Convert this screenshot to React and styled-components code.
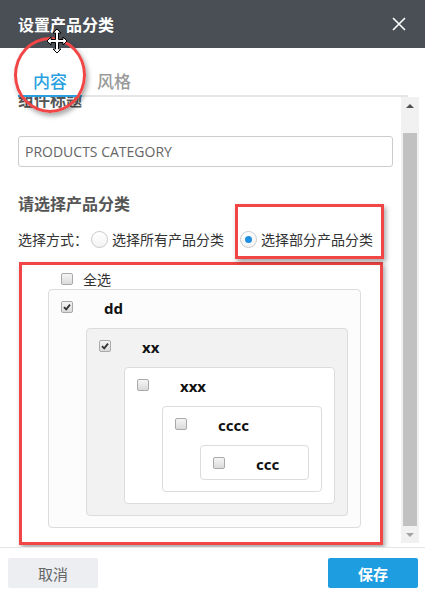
import styled, { createGlobalStyle, css } from "styled-components";

const GlobalStyle = createGlobalStyle`
  html, body {
    margin: 0;
    padding: 0;
    background: #fff;
  }
  body {
    font-family: "Noto Sans", "Noto Sans CJK SC", sans-serif;
    color: #333;
  }
`;

const tree = {
  label: "dd",
  checked: true,
  bg: "#fcfcfc",
  child: {
    label: "xx",
    checked: true,
    bg: "#f2f2f2",
    child: {
      label: "xxx",
      bg: "#fff",
      child: {
        label: "cccc",
        bg: "#fff",
        child: { label: "ccc", bg: "#fff" },
      },
    },
  },
};

function Checkbox({ checked }) {
  return (
    <Box>
      {checked && (
        <svg width="10" height="10" viewBox="0 0 10 10">
          <path d="M2 5.2 L4.2 7.4 L8 2.6" fill="none" stroke="#333" strokeWidth="1.8" />
        </svg>
      )}
    </Box>
  );
}

function Node({ node }) {
  return (
    <NodeBox $bg={node.bg} $leaf={!node.child}>
      <NodeRow>
        <Checkbox checked={node.checked} />
        <NodeLabel>{node.label}</NodeLabel>
      </NodeRow>
      {node.child && <Node node={node.child} />}
    </NodeBox>
  );
}

function App() {
  return (
    <Dialog>
      <GlobalStyle />
      <Header>
        <Title>设置产品分类</Title>
        <svg width="14" height="14" viewBox="0 0 14 14">
          <path d="M1 1 L13 13 M13 1 L1 13" stroke="#fff" strokeWidth="1.6" />
        </svg>
      </Header>

      <TabBar>
        <Tab $active>内容</Tab>
        <Tab>风格</Tab>
      </TabBar>

      <Body>
        <ScrollPane>
          <Content>
            <FieldLabel>组件标题</FieldLabel>
            <Input>PRODUCTS CATEGORY</Input>
            <SectionTitle>请选择产品分类</SectionTitle>
            <ModeRow>
              <span>选择方式：</span>
              <RadioOption>
                <Radio />
                <span>选择所有产品分类</span>
              </RadioOption>
              <RadioOption $marked>
                <Radio $on />
                <span>选择部分产品分类</span>
              </RadioOption>
            </ModeRow>
            <TreeFrame>
              <SelectAll>
                <Checkbox />
                <span>全选</span>
              </SelectAll>
              <Node node={tree} />
            </TreeFrame>
          </Content>
        </ScrollPane>
        <ScrollTrack>
          <ArrowCell>
            <Triangle $up />
          </ArrowCell>
          <ThumbArea>
            <Thumb />
          </ThumbArea>
          <ArrowCell>
            <Triangle />
          </ArrowCell>
        </ScrollTrack>
      </Body>

      <Footer>
        <Button>取消</Button>
        <Button $primary>保存</Button>
      </Footer>

      <CircleMark />
      <Cursor width="22" height="26" viewBox="0 0 22 26">
        <path
          d="M11 1 L15 5 L12.5 5 L12.5 11.5 L17 11.5 L17 9 L21 13 L17 17 L17 14.5 L12.5 14.5 L12.5 21 L15 21 L11 25 L7 21 L9.5 21 L9.5 14.5 L5 14.5 L5 17 L1 13 L5 9 L5 11.5 L9.5 11.5 L9.5 5 L7 5 Z"
          fill="#fff"
          stroke="#000"
          strokeWidth="1"
        />
      </Cursor>
    </Dialog>
  );
}

const markShadow = css`
  border: 3px solid #f24545;
  box-shadow: 2px 3px 5px rgba(0, 0, 0, 0.35);
`;

const Dialog = styled.div`
  position: relative;
  width: 425px;
  height: 596px;
  display: flex;
  flex-direction: column;
  background: #fff;
  overflow: hidden;
`;

const Header = styled.div`
  height: 48px;
  flex-shrink: 0;
  background: #4a4e55;
  display: flex;
  align-items: center;
  justify-content: space-between;
  padding: 0 19px 0 18px;
`;

const Title = styled.div`
  color: #fff;
  font-size: 16px;
  font-weight: 700;
  font-family: "Noto Sans CJK SC", sans-serif;
`;

const TabBar = styled.div`
  height: 47px;
  margin: 0 17px 0 18px;
  border-bottom: 2px solid #e6e6e6;
  display: flex;
  align-items: flex-end;
`;

const Tab = styled.div`
  padding: 0 15px;
  height: 25px;
  margin-bottom: -2px;
  font-size: 17px;
  line-height: 22px;
  font-family: "Noto Sans CJK SC", sans-serif;
  font-weight: 500;
  color: ${(p) => (p.$active ? "#2a9fe0" : "#9a9a9a")};
  border-bottom: 2px solid ${(p) => (p.$active ? "#2a9fe0" : "transparent")};
`;

const Body = styled.div`
  height: 450px;
  flex-shrink: 0;
  display: flex;
`;

const ScrollPane = styled.div`
  flex: 1;
  overflow: hidden;
  padding: 0 8px 0 18px;
`;

const Content = styled.div`
  margin-top: -10px;
  display: flex;
  flex-direction: column;
`;

const FieldLabel = styled.div`
  font-size: 16px;
  font-weight: 700;
  line-height: 24px;
  color: #555;
  font-family: "Noto Sans CJK SC", sans-serif;
`;

const Input = styled.div`
  margin-top: 25px;
  height: 31px;
  box-sizing: border-box;
  border: 1px solid #ccc;
  border-radius: 3px;
  padding: 0 6px;
  display: flex;
  align-items: center;
  font-family: "Open Sans", sans-serif;
  font-size: 14px;
  color: #666;
`;

const SectionTitle = styled(FieldLabel)`
  margin-top: 24px;
`;

const ModeRow = styled.div`
  margin-top: 12px;
  height: 24px;
  display: flex;
  align-items: center;
  font-size: 14px;
  color: #333;
  font-family: "Noto Sans CJK SC", sans-serif;
`;

const RadioOption = styled.label`
  position: relative;
  display: flex;
  align-items: center;
  gap: 4px;
  margin-left: ${(p) => (p.$marked ? "16px" : "3px")};

  ${(p) =>
    p.$marked &&
    css`
      &::after {
        content: "";
        position: absolute;
        top: -25px;
        bottom: -10px;
        left: -5px;
        right: -11px;
        ${markShadow}
      }
    `}
`;

const Radio = styled.span`
  width: 17px;
  height: 17px;
  box-sizing: border-box;
  border-radius: 50%;
  border: 1px solid #c9c9c9;
  background: linear-gradient(#fff, #f3f3f3);
  display: flex;
  align-items: center;
  justify-content: center;

  &::after {
    content: "";
    width: 7px;
    height: 7px;
    border-radius: 50%;
    background: #1e8fe0;
    display: ${(p) => (p.$on ? "block" : "none")};
  }
`;

const TreeFrame = styled.div`
  margin: 11px 0 0 1px;
  width: 364px;
  box-sizing: border-box;
  padding: 6px 19px 14px 26px;
  ${markShadow}
`;

const SelectAll = styled.div`
  height: 16px;
  display: flex;
  align-items: center;
  gap: 10px;
  padding-left: 13px;
  margin-bottom: 2px;
  font-size: 14px;
  color: #333;
  font-family: "Noto Sans CJK SC", sans-serif;
`;

const Box = styled.span`
  width: 12px;
  height: 12px;
  box-sizing: border-box;
  border: 1px solid #a9a9a9;
  border-radius: 2px;
  background: linear-gradient(#f5f5f5, #dadada);
  display: flex;
  align-items: center;
  justify-content: center;
  flex-shrink: 0;
`;

const NodeBox = styled.div`
  background: ${(p) => p.$bg};
  border: 1px solid #dcdcdc;
  border-radius: 4px;
  padding: 9px 12px ${(p) => (p.$leaf ? "8px" : "11px")} 12px;

  & > & {
    margin: 13px 0 0 25px;
  }
`;

const NodeRow = styled.div`
  height: 16px;
  display: flex;
  align-items: center;
  gap: 31px;
`;

const NodeLabel = styled.span`
  font-size: 15px;
  font-weight: 700;
  color: #111;
  font-family: "Noto Sans", sans-serif;
  position: relative;
  top: 1px;
`;

const ScrollTrack = styled.div`
  width: 18px;
  height: 446px;
  margin-right: 6px;
  background: #f1f1f1;
  display: flex;
  flex-direction: column;
`;

const ArrowCell = styled.div`
  height: 17px;
  display: flex;
  align-items: center;
  justify-content: center;
`;

const Triangle = styled.span`
  width: 0;
  height: 0;
  border-left: 4px solid transparent;
  border-right: 4px solid transparent;
  ${(p) =>
    p.$up
      ? css`
          border-bottom: 4px solid #505050;
        `
      : css`
          border-top: 4px solid #a3a3a3;
        `}
`;

const ThumbArea = styled.div`
  flex: 1;
  padding: 19px 2px 0;
  display: flex;
`;

const Thumb = styled.div`
  flex: 1;
  background: #c1c1c1;
`;

const Footer = styled.div`
  flex: 1;
  border-top: 1px solid #e5e5e5;
  display: flex;
  justify-content: space-between;
  align-items: flex-start;
  padding: 10px 7px 0 8px;
`;

const Button = styled.div`
  width: 90px;
  height: 30px;
  border-radius: 2px;
  display: flex;
  align-items: center;
  justify-content: center;
  font-size: 15px;
  font-family: "Noto Sans CJK SC", sans-serif;
  background: ${(p) => (p.$primary ? "#1e9de0" : "#eceef2")};
  color: ${(p) => (p.$primary ? "#fff" : "#666")};
  font-weight: ${(p) => (p.$primary ? 700 : 400)};
`;

const CircleMark = styled.div`
  position: absolute;
  left: 14px;
  top: 37px;
  width: 72px;
  height: 76px;
  box-sizing: border-box;
  border-radius: 50%;
  ${markShadow}
`;

const Cursor = styled.svg`
  position: absolute;
  left: 46px;
  top: 28px;
`;

export default App;
